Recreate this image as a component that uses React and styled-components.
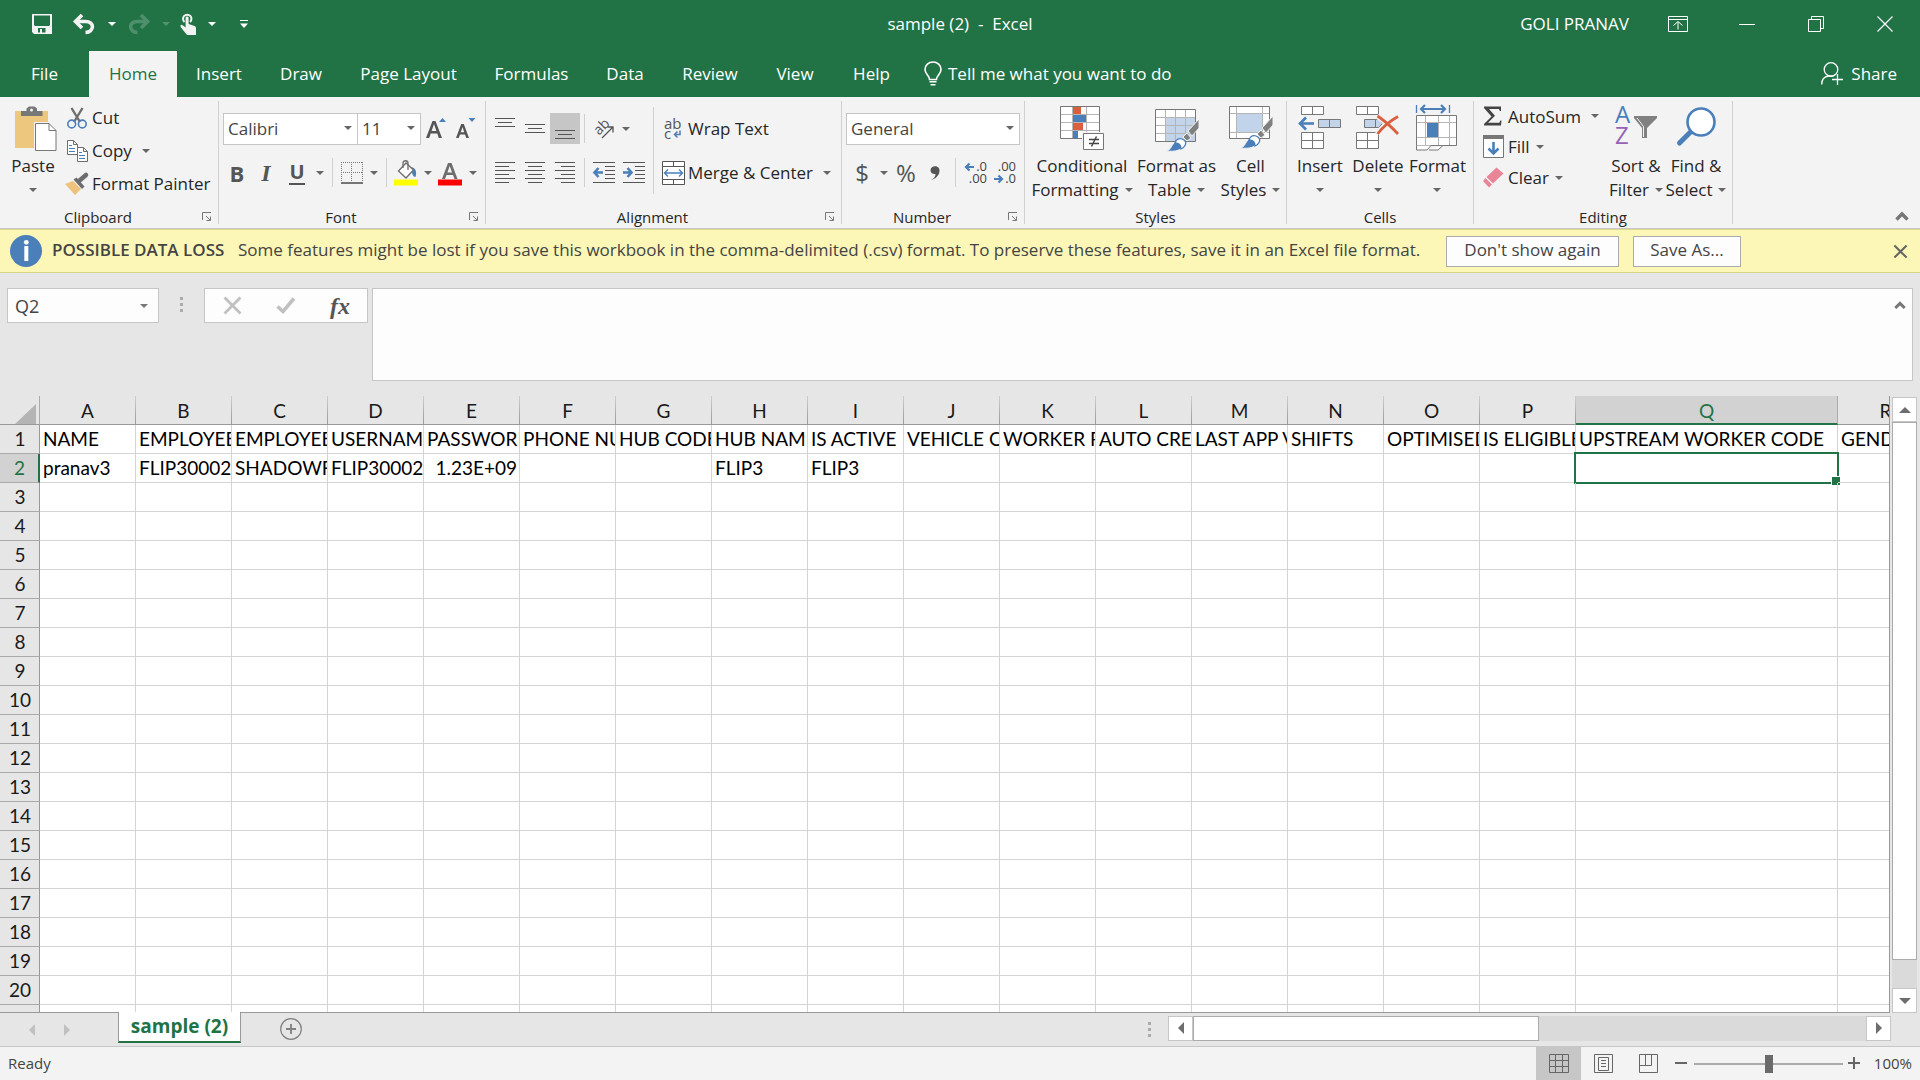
import React from 'react';
import styled, { createGlobalStyle } from 'styled-components';

const GlobalStyle = createGlobalStyle`
    * {
        box-sizing: border-box;
    }

    body {
        margin: 0;
        overflow: hidden;
        background: #e6e6e6;
        color: #262626;
        font-family: 'Open Sans', 'Noto Sans', sans-serif;
        font-size: 17px;
    }

    button, input, select, textarea {
        margin: 0;
        padding: 0;
        border: none;
        border-radius: 0;
        background: none;
        color: inherit;
        font: inherit;
        outline: none;
    }

    svg {
        display: block;
        flex-shrink: 0;
        overflow: visible;
    }
`

const Window = styled.div`
    display: flex;
    flex-direction: column;
    height: 100vh;
`

/* ---------- title bar and tabs ---------- */

const TitleBar = styled.header`
    display: grid;
    grid-template-columns: 1fr auto 1fr;
    align-items: center;
    height: 51px;
    padding-bottom: 4px;
    background: #217346;
    color: #ffffff;

    h1 {
        margin: 0;
        font-size: 17px;
        font-weight: 400;
        white-space: pre;
    }
`

const QuickAccess = styled.div`
    display: flex;
    align-items: center;
    padding-left: 24px;
`

const Tool = styled.button`
    display: flex;
    align-items: center;
    justify-content: center;
    flex-shrink: 0;
    width: ${(p) => p.$w || 30}px;
    height: 31px;
    color: ${(p) => p.$color || '#5a5a5a'};
    background: ${(p) => (p.$active ? '#c6c6c6' : 'none')};
    opacity: ${(p) => (p.$dim ? 0.22 : 1)};
`

const WindowControls = styled.div`
    display: flex;
    align-items: center;
    justify-content: flex-end;
    padding-right: 1px;

    span {
        margin-right: 14px;
    }
`

const TabBar = styled.nav`
    display: flex;
    align-items: stretch;
    height: 46px;
    padding-right: 23px;
    background: #217346;
    color: #ffffff;
`

const Tab = styled.button`
    width: ${(p) => p.$w}px;
    padding-bottom: 2px;
    white-space: nowrap;
    color: ${(p) => (p.$active ? '#217346' : '#ffffff')};
    background: ${(p) => (p.$active ? '#f3f3f3' : 'none')};
`

const TellMe = styled.button`
    display: flex;
    align-items: center;
    gap: 6px;
    margin-left: 14px;
    padding-bottom: 2px;
    white-space: nowrap;
`

const Share = styled(TellMe)`
    gap: 8px;
    margin-left: auto;
`

/* ---------- ribbon ---------- */

const Ribbon = styled.section`
    display: flex;
    height: 132px;
    padding: 4px 0;
    background: #f3f3f3;
    border-bottom: 1px solid #c6c6c6;
`

const GroupBox = styled.div`
    display: flex;
    flex-direction: column;
    flex-shrink: 0;
    width: ${(p) => p.$w}px;
    border-right: 1px solid #d0d0d0;
`

const GroupBody = styled.div`
    display: flex;
    height: 105px;
    padding-left: ${(p) => p.$pad}px;
`

const GroupLabel = styled.div`
    display: flex;
    align-items: center;
    height: 18px;
    padding-top: 3px;
    font-size: 15px;
    line-height: 18px;
    text-align: center;

    span {
        flex: 1;
    }

    button {
        display: flex;
        justify-content: center;
        width: 22px;
    }
`

const Rows = styled.div`
    display: flex;
    flex-direction: column;
    gap: 13px;
    padding-top: 12px;
`

const Row = styled.div`
    display: flex;
    align-items: center;
    height: 31px;
`

const Divider = styled.span`
    display: flex;
    flex-shrink: 0;
    justify-content: center;
    width: ${(p) => p.$w || 10}px;

    &::before {
        content: '';
        width: 1px;
        height: 29px;
        background: #d0d0d0;
    }
`

const TallDivider = styled.span`
    width: 1px;
    height: 87px;
    margin: 6px 4px 0 4px;
    background: #d0d0d0;
`

const SmallButton = styled.button`
    display: flex;
    align-items: center;
    height: ${(p) => p.$h}px;
    white-space: nowrap;
`

const IconSlot = styled.span`
    display: flex;
    justify-content: center;
    flex-shrink: 0;
    width: 30px;
`

const CaretSlot = styled.span`
    margin-left: ${(p) => p.$gap}px;
`

const Column = styled.div`
    display: flex;
    flex-direction: column;
    width: ${(p) => p.$w}px;
`

const BigButton = styled.button`
    display: grid;
    grid-template-rows: 53px 24px 24px;
    align-content: start;
    justify-content: center;
    justify-items: center;
    width: ${(p) => p.$w}px;
    flex-shrink: 0;
    line-height: 24px;
    white-space: nowrap;

    > svg {
        margin-top: 5px;
    }

    span {
        display: flex;
        align-items: center;
        gap: 6px;
    }
`

const Combo = styled.span`
    display: grid;
    align-items: center;
    width: ${(p) => p.$w}px;
    height: 32px;
    margin-right: ${(p) => (p.$joined ? '-1px' : '0')};
    background: #ffffff;
    border: 1px solid #c6c6c6;

    select {
        grid-area: 1 / 1;
        width: 100%;
        height: 30px;
        padding-left: 4px;
        appearance: none;
        color: #444444;
    }

    svg {
        grid-area: 1 / 1;
        justify-self: end;
        margin: 0 5px 2px 0;
        pointer-events: none;
    }
`

const Glyph = styled.span`
    font-family: ${(p) => (p.$serif ? "'Liberation Serif', serif" : "'Open Sans', sans-serif")};
    font-size: ${(p) => p.$size || 22}px;
    font-weight: ${(p) => (p.$bold ? 700 : 400)};
    font-style: ${(p) => (p.$italic ? 'italic' : 'normal')};
    line-height: 24px;
    color: ${(p) => p.$color || '#555555'};
`

const Underlined = styled(Glyph)`
    height: 24px;
    line-height: 22px;
    border-bottom: 2px solid #555555;
`

const Collapse = styled.button`
    align-self: flex-end;
    margin: 0 11px 3px auto;
`

/* ---------- message bar ---------- */

const MessageBar = styled.section`
    display: flex;
    align-items: center;
    flex-shrink: 0;
    height: 44px;
    padding: 0 13px 0 10px;
    background: #fcf7b6;
    border-top: 1px solid #dedb8e;
    border-bottom: 1px solid #d6d38a;
    color: #444444;
    line-height: 24px;
    white-space: nowrap;

    strong {
        width: 176px;
        margin: 0 10px;
        padding-bottom: 2px;
        font-weight: 600;
    }
`

const MessageButton = styled.button`
    width: ${(p) => p.$w}px;
    height: 31px;
    margin-right: 14px;
    padding-bottom: 2px;
    background: #fdfdfd;
    border: 1px solid #ababab;
`

const MessageText = styled.span`
    flex: 0 0 1208px;
    padding-bottom: 2px;
`

/* ---------- formula bar ---------- */

const FormulaBar = styled.section`
    display: flex;
    align-items: flex-start;
    flex-shrink: 0;
    height: 123px;
    padding: 15px 7px 15px 7px;
`

const NameBox = styled.div`
    display: flex;
    align-items: center;
    width: 152px;
    height: 35px;
    padding-right: 10px;
    background: #fdfdfd;
    border: 1px solid #c6c6c6;

    input {
        flex: 1;
        min-width: 0;
        padding-left: 7px;
        color: #444444;
        font-size: 18px;
    }
`

const Grip = styled.span`
    display: flex;
    justify-content: center;
    width: ${(p) => p.$w}px;
    padding-top: ${(p) => p.$top || 0}px;
`

const FormulaTools = styled.div`
    display: flex;
    align-items: center;
    justify-content: space-around;
    width: 164px;
    height: 35px;
    margin-right: 4px;
    background: #fdfdfd;
    border: 1px solid #c6c6c6;
`

const FormulaField = styled.div`
    display: flex;
    align-items: flex-start;
    flex: 1;
    height: 93px;
    background: #fdfdfd;
    border: 1px solid #c6c6c6;

    textarea {
        flex: 1;
        height: 91px;
        resize: none;
    }

    button {
        margin: 12px 6px 0 0;
    }
`

/* ---------- sheet ---------- */

const SheetArea = styled.main`
    display: flex;
    flex: 1;
    min-height: 0;
`

const GridPane = styled.div`
    flex: 1;
    min-width: 0;
    overflow: hidden;
    background: #ffffff;
    border-right: 1px solid #999999;
    border-bottom: 1px solid #999999;
`

const Grid = styled.table`
    table-layout: fixed;
    width: 1934px;
    border-collapse: separate;
    border-spacing: 0;
    color: #000000;
    font-family: Lato, Carlito, sans-serif;
    font-size: 19px;
    line-height: 28px;

    tr {
        height: 29px;
    }
`

const ColHead = styled.th`
    height: 29px;
    padding: 2px 0 0;
    font-weight: 400;
    color: ${(p) => (p.$active ? '#217346' : '#1a1a1a')};
    background: ${(p) => (p.$active ? '#d2d2d2' : '#e6e6e6')};
    border-right: 1px solid;
    border-bottom: ${(p) => (p.$active ? '2px solid #217346' : '1px solid #999999')};
    border-image: ${(p) => (p.$active ? 'none' : 'linear-gradient(#d0d0d0, #999999) 1')};
    border-right-color: #ababab;
    line-height: 24px;
`

const Corner = styled.th`
    padding: 8px 3px 0 0;
    background: #e6e6e6;
    border-right: 1px solid #ababab;
    border-bottom: 1px solid #999999;

    svg {
        margin-left: auto;
    }
`

const RowHead = styled.th`
    padding: 0 0 0 1px;
    font-weight: 400;
    color: ${(p) => (p.$active ? '#217346' : '#1a1a1a')};
    background: ${(p) => (p.$active ? '#d2d2d2' : '#e6e6e6')};
    border-right: ${(p) => (p.$active ? '2px solid #217346' : '1px solid #999999')};
    border-bottom: 1px solid #ababab;
`

const Cell = styled.td`
    position: relative;
    height: 29px;
    padding: 0 3px;
    border-right: 1px solid #d4d4d4;
    border-bottom: 1px solid #d4d4d4;
    text-align: ${(p) => (p.$right ? 'right' : 'left')};

    div {
        height: 28px;
        margin-right: -3px;
        padding-right: ${(p) => (p.$right ? 2 : 0)}px;
        overflow: hidden;
        white-space: nowrap;
    }
`

const Selection = styled.span`
    position: absolute;
    top: -2px;
    right: -2px;
    bottom: -2px;
    left: -2px;
    border: 2px solid #217346;

    &::after {
        content: '';
        position: absolute;
        right: -4px;
        bottom: -4px;
        width: 8px;
        height: 8px;
        background: #217346;
        border: 1px solid #ffffff;
    }
`

const VerticalScroll = styled.div`
    display: flex;
    flex-direction: column;
    width: 30px;
    padding: 1px 3px 0 2px;
`

const ScrollButton = styled.button`
    display: flex;
    align-items: center;
    justify-content: center;
    flex-shrink: 0;
    width: 25px;
    height: 25px;
    background: #ffffff;
    border: 1px solid #c6c6c6;
`

const Track = styled.div`
    display: flex;
    flex: 1;
    flex-direction: ${(p) => (p.$vertical ? 'column' : 'row')};
    background: #dadada;
`

const Thumb = styled.div`
    flex: 0 0 ${(p) => p.$size};
    background: #ffffff;
    border: 1px solid #ababab;
`

/* ---------- bottom bars ---------- */

const SheetTabs = styled.nav`
    display: flex;
    align-items: center;
    flex-shrink: 0;
    height: 34px;
    padding-left: 14px;
    border-bottom: 1px solid #c6c6c6;
`

const SheetTab = styled.button`
    align-self: flex-start;
    width: 123px;
    height: 31px;
    margin: -1px 39px 0 34px;
    padding-bottom: 2px;
    background: #ffffff;
    border: 1px solid #999999;
    border-top: none;
    border-bottom: 2px solid #217346;
    color: #217346;
    font-size: 19px;
    font-weight: 700;
    line-height: 26px;
`

const NewSheet = styled.button`
    padding-bottom: 2px;
`

const HorizontalScroll = styled.div`
    display: flex;
    width: 723px;
    height: 25px;
    margin: 0 29px 3px 0;
`

const StatusBar = styled.footer`
    display: flex;
    align-items: center;
    flex-shrink: 0;
    height: 33px;
    padding: 0 8px;
    background: #f3f3f3;
    color: #444444;
    font-size: 15px;
`

const ViewButton = styled(Tool)`
    height: 33px;
`

const ZoomSlider = styled.input`
    width: 149px;
    height: 18px;
    margin: 0 5px 0 3px;
    appearance: none;

    &::-webkit-slider-runnable-track {
        height: 2px;
        background: #ababab;
    }

    &::-webkit-slider-thumb {
        appearance: none;
        width: 8px;
        height: 18px;
        margin-top: -8px;
        background: #6a6a6a;
    }
`

const StatusText = styled.span`
    width: ${(p) => p.$w}px;
    padding-bottom: 2px;
    text-align: right;
`

const Spacer = styled.span`
    flex: 1;
`

/* ---------- icons ---------- */

const BLUE = '#4a7fb9';
const GREY = '#6d6d6d';

const Caret = ({ color = '#666666' }) => (
    <svg width="8" height="4" viewBox="0 0 8 4"><path d="M0 0h8L4 4z" fill={color} /></svg>
)

const Arrow = ({ turn = 0, w = 12, color = '#6d6d6d' }) => (
    <svg width={w} height={w} viewBox="0 0 12 12"><path d="M0 9h12L6 3z" fill={color} transform={`rotate(${turn} 6 6)`} /></svg>
)

const Chevron = ({ w = 14 }) => (
    <svg width={w} height="9" viewBox="0 0 14 9"><path d="M1.5 7.5L7 2l5.500 5.500" fill="none" stroke="#777" strokeWidth="3.400" /></svg>
)

const Dots = () => (
    <svg width="3" height="16" viewBox="0 0 3 16" fill="#ababab"><path d="M0 0h3v3H0zM0 6h3v3H0zM0 12h3v3H0z" /></svg>
)

const SaveIcon = () => (
    <svg width="20" height="20" viewBox="0 0 20 20" fill="#f3f3f3">
        <path fillRule="evenodd" d="M0 0h20v20H2l-2-2zM2 1.500v9.500l1 1h14l1-1V1.500zM6 14v4.500h2V15h2v3.500h3.500V14z" />
    </svg>
)

const UndoIcon = ({ flip }) => (
    <svg width="22" height="20" viewBox="0 0 22 20">
        <g transform={flip ? 'translate(22 0) scale(-1 1)' : undefined} fill="none" stroke="#f3f3f3" strokeWidth="3.600">
            <path d="M3 7.500h9.500c9.500 0 9 10.500 0 11" />
            <path d="M9 1L2.500 7.500 9 14" />
        </g>
    </svg>
)

const TouchIcon = () => (
    <svg width="16" height="22" viewBox="0 0 16 22">
        <path d="M4.500 9A4.200 4.200 0 1 1 10 9" fill="none" stroke="#f3f3f3" strokeWidth="2" />
        <path d="M5.600 5c0-2 3-2 3 0v6l6 2c1.300.5 1.400 1.500 1.400 2.500V22H7L1 14.500c-1.600-2.500.4-3.500 2-2l2.600 2z" fill="#f3f3f3" />
    </svg>
)

const CustomizeIcon = () => (
    <svg width="8" height="8" viewBox="0 0 8 8" fill="#fff"><path d="M0 0h8v1H0zM0 3.500h8L4 8z" /></svg>
)

const DisplayIcon = () => (
    <svg width="20" height="16" viewBox="0 0 20 16" fill="none" stroke="#fff">
        <path d="M.5.5h19v15H.5zM.5 3.500h19M10 13.500V6M5.500 9.500L10 5.500l4.500 4" />
    </svg>
)

const MinimizeIcon = () => (
    <svg width="16" height="16" viewBox="0 0 16 16"><path d="M0 8.500h16" stroke="#fff" /></svg>
)

const RestoreIcon = () => (
    <svg width="16" height="16" viewBox="0 0 16 16" fill="none" stroke="#fff"><path d="M.5 3.500h12v12H.5zM3.500 3.500v-3h12v12h-3" /></svg>
)

const CloseIcon = ({ size = 16, color = '#fff', width = 1.2 }) => (
    <svg width={size} height={size} viewBox="0 0 16 16"><path d="M.5.5l15 15M15.500.5l-15 15" stroke={color} strokeWidth={width} /></svg>
)

const BulbIcon = () => (
    <svg width="18" height="25" viewBox="0 0 18 25" fill="none" stroke="#fff" strokeWidth="1.600">
        <path d="M5.500 18.500c0-4-4.500-5-4.500-10a8 7.500 0 0 1 16 0c0 5-4.500 6-4.500 10zM5.500 20.800h7M6.500 23.800h5" />
    </svg>
)

const PersonIcon = () => (
    <svg width="22" height="23" viewBox="0 0 22 23" fill="none" stroke="#fff" strokeWidth="1.300">
        <circle cx="10" cy="7.500" r="6.800" />
        <path d="M.7 22.500c0-5 3-8 7-8.500h4M16.500 12v11M11 17.500h11" />
    </svg>
)

const PasteIcon = () => (
    <svg width="48" height="46" viewBox="-6 0 48 46">
        <path d="M0 5h33v37H0z" fill="#eec77f" />
        <path d="M6 10V5h5.500V2.500L14 .5h5.500L22 2.500V5h5.500v5z" fill="#777" />
        <circle cx="16.500" cy="4" r="1.500" fill="#f3f3f3" />
        <path d="M19 16h15l7.500 8v21.500H19z" fill="#f3f3f3" />
        <path d="M20.500 17.500H34l7 7V44.500H20.500z" fill="#fff" stroke="#777" />
        <path d="M34 17.500v7h7" fill="none" stroke="#777" />
    </svg>
)

const CutIcon = () => (
    <svg width="20" height="22" viewBox="0 0 20 22" fill="none">
        <path d="M4.500 1l8.500 14M15.500 1L7 15" stroke="#6d6d6d" strokeWidth="2.400" />
        <g stroke={BLUE} strokeWidth="1.600"><circle cx="4.700" cy="17" r="3.900" /><circle cx="15.300" cy="17" r="3.900" /></g>
    </svg>
)

const CopyIcon = () => (
    <svg width="21" height="22" viewBox="0 0 21 22" fill="#fff" stroke={GREY}>
        <path d="M.5.5h6l4 4v10h-10zM6.500.5v4h4" />
        <path d="M10.500 7.500h6l4 4v10h-10zM16.500 7.500v4h4" />
        <path d="M2 5.500h3M2 8.500h6M2 11.500h6M12 12.500h3M12 15.500h6M12 18.500h6" stroke={BLUE} />
    </svg>
)

const PainterIcon = () => (
    <svg width="24" height="22" viewBox="0 0 24 22">
        <path d="M0 11l8-3 8 8-6 6z" fill="#eec27c" />
        <path d="M8.500 6.500l3-2 8 9-2.500 2.500z" fill="#6d6d6d" />
        <path d="M14 8l7-6" stroke="#6d6d6d" strokeWidth="4.500" strokeLinecap="round" />
    </svg>
)

const LauncherIcon = () => (
    <svg width="10" height="10" viewBox="0 0 10 10" fill="none" stroke="#777">
        <path d="M.5 8V.5H9M4 4l4 4M8.500 4.500v4h-4" />
    </svg>
)

const FontSizeIcon = ({ grow }) => (
    <svg width="20" height="24" viewBox="0 0 20 24">
        <path d={grow ? 'M0 21L6.500 4h3L16 21h-3.200l-1.500-4.500H4.700L3.200 21zM5.600 14h4.800L8 7z' : 'M0 21L5.200 7h2.600L13 21h-2.700L9 17.500H4L2.700 21zM4.800 15.300h3.400L6.500 10z'} fill="#555" fillRule="evenodd" />
        <path d={grow ? 'M13 5l3.500-4L20 5z' : 'M12.500 1h7L16 5z'} fill={BLUE} />
    </svg>
)

const BordersIcon = () => (
    <svg width="22" height="22" viewBox="0 0 22 22" fill="none" stroke="#777">
        <path d="M0 .5h22M.5 0v20M21.500 0v20M10.500 0v20M0 10.500h22" strokeDasharray="1 1" />
        <path d="M0 21h22" strokeWidth="1.600" stroke="#555" />
    </svg>
)

const FillColorIcon = () => (
    <svg width="24" height="26" viewBox="0 0 24 26">
        <path d="M17 7c5 1 6 5 4.500 10-3 0-3-4-4.500-7z" fill={BLUE} />
        <path d="M12 3L4.500 11l7.500 7 7.500-8z" fill="#fff" stroke="#6d6d6d" strokeWidth="1.300" />
        <path d="M9 8V3c0-3 5-3 5 0v7" fill="none" stroke="#6d6d6d" strokeWidth="1.300" />
        <path d="M0 19.500h24v6H0z" fill="#ffff00" />
    </svg>
)

const FontColorIcon = () => (
    <svg width="24" height="26" viewBox="0 0 24 26">
        <path d="M4 19L10 3h3.500l6 16h-3l-1.500-4H8.500L7 19zM9.400 12.500h4.700L11.700 6z" fill="#6d6d6d" fillRule="evenodd" />
        <path d="M0 19.500h24v6H0z" fill="#ff0000" />
    </svg>
)

const LinesIcon = ({ lines, h = 22 }) => (
    <svg width="20" height={h} viewBox={`0 0 20 ${h}`}>
        <path d={lines.map(([x, y, w]) => `M${x} ${y}.5h${w}`).join('')} stroke="#555" strokeWidth="1" />
    </svg>
)

const AngleIcon = () => (
    <svg width="22" height="22" viewBox="0 0 22 22">
        <text x="1" y="14" transform="rotate(-45 8 10)" fontFamily="Open Sans" fontSize="14" fill="#555">ab</text>
        <path d="M9 20L19.500 9.500M14.500 9h5.500v5.500" fill="none" stroke="#555" strokeWidth="1.300" />
    </svg>
)

const IndentIcon = ({ out }) => (
    <svg width="22" height="22" viewBox="0 0 22 22" fill="none">
        <path d="M0 .5h22M12 4.500h10M12 8.500h10M12 12.500h10M12 16.500h10M0 20.500h22" stroke="#555" />
        <path d={out ? 'M1 10.500h9M5.500 6L1.500 10.500l4 4.500' : 'M0 10.500h8M4.500 6l4 4.500-4 4.500'} stroke={BLUE} strokeWidth="2.600" />
    </svg>
)

const WrapIcon = () => (
    <svg width="18" height="22" viewBox="0 0 18 22">
        <g fontFamily="Open Sans" fontSize="15" fill="#555"><text x="0" y="11">ab</text><text x="0" y="21">c</text></g>
        <path d="M16 12.500v4h-5M13.500 13.500l-3 3 3 3" fill="none" stroke={BLUE} strokeWidth="1.500" />
    </svg>
)

const MergeIcon = () => (
    <svg width="23" height="24" viewBox="0 0 23 24" fill="#fff" stroke="#555">
        <path d="M.5.5h22v23H.5zM.5 5.500h22M.5 18.500h22M11.500.5v5M11.500 18.500v5" />
        <path d="M3 12h17M6 8.500L2.500 12 6 15.500M17 8.500l3.500 3.500-3.500 3.500" fill="none" stroke={BLUE} strokeWidth="1.400" />
    </svg>
)

const DecimalIcon = ({ more }) => (
    <svg width="24" height="24" viewBox="0 0 24 24">
        <g fontFamily="Open Sans" fontSize="13" fill="#444" textAnchor="end">
            <text x="23" y="10">{more ? '.0' : '.00'}</text>
            <text x="23" y="22">{more ? '.00' : '.0'}</text>
        </g>
        <path d={more ? 'M2 6h8M5.500 2.500L2 6l3.500 3.500' : 'M1 18h8M5.500 14.500L9 18l-3.500 3.500'} fill="none" stroke={BLUE} strokeWidth="2.200" />
    </svg>
)

const ConditionalIcon = () => (
    <svg width="44" height="45" viewBox="0 0 44 45">
        <path d="M.5.5h39v32H.5z" fill="#fff" />
        <path d="M1 8.500h39M1 16.500h39M1 24.500h39M12.500 1v32M26.500 1v32" stroke="#b5b5b5" fill="none" />
        <path d="M.5.5h39v32H.5z" fill="none" stroke="#777" />
        <path d="M13 1h8v7h-8zM13 17h10v7H13z" fill="#d9603f" />
        <path d="M13 9h13v7H13zM13 25h5v7h-5z" fill={BLUE} />
        <path d="M22 26h22v19H22z" fill="#f3f3f3" />
        <path d="M23.500 27.500h20v16h-20z" fill="#fff" stroke="#777" />
        <path d="M29 33.500h10M29 37.500h10M36.500 30.500l-5 10" stroke="#444" strokeWidth="1.400" />
    </svg>
)

const Brush = () => (
    <g>
        <path d="M11 45c5-1 5-5 8-8 3-3 8-1 8 3s-6 6-16 5z" fill={BLUE} stroke="#f3f3f3" strokeWidth="1" />
        <path d="M20 37c1-4 5-6 9-3s0 8-3 9c0-4-2-6-6-6z" fill="#fff" stroke={BLUE} strokeWidth="1.300" />
        <path d="M28 31l4-4 4 5-4 3z" fill="#808080" stroke="#f3f3f3" strokeWidth="1" />
        <path d="M33 25l11-12v9l-7 8z" fill="#808080" stroke="#f3f3f3" strokeWidth="1" />
    </g>
)

const FormatTableIcon = () => (
    <svg width="44" height="45" viewBox="0 0 44 45">
        <path d="M.5 3.500h40v32H.5z" fill="#fff" />
        <path d="M11 12h29v23H11z" fill="#c1d4e9" />
        <path d="M1 11.500h39M1 19.500h39M1 27.500h39M10.500 4v31M20.500 4v31M30.500 4v31" stroke="#b5b5b5" />
        <path d="M.5 3.500h40v32H.5z" fill="none" stroke="#777" />
        <Brush />
    </svg>
)

const CellStylesIcon = () => (
    <svg width="44" height="45" viewBox="0 0 44 45">
        <path d="M.5.5h40v32H.5z" fill="#fff" />
        <path d="M8 8h25v18H8z" fill="#c1d4e9" />
        <path d="M1 7.500h39M1 26.500h39M7.500 1v31M33.500 1v31" stroke="#b5b5b5" />
        <path d="M.5.5h40v32H.5z" fill="none" stroke="#777" />
        <g transform="translate(0 -3)"><Brush /></g>
    </svg>
)

const InsertCellsIcon = () => (
    <svg width="44" height="45" viewBox="0 0 44 45" fill="#fff" stroke="#777">
        <path d="M3.500.5h22v8h-22zM14.500.5v8M3.500 26.500h22v16h-22zM3.500 34.500h22M14.500 26.500v16" />
        <path d="M20.500 13.500h22v8h-22zM31.500 13.500v8" fill="#c1d4e9" />
        <path d="M1 17.500h15M8 11.500l-6 6 6 6" fill="none" stroke={BLUE} strokeWidth="2.600" />
    </svg>
)

const DeleteCellsIcon = () => (
    <svg width="44" height="45" viewBox="0 0 44 45" fill="#fff" stroke="#777">
        <path d="M.5.5h22v8H.5zM11.500.5v8M.5 26.500h22v16H.5zM.5 34.500h22M11.500 26.500v16" />
        <path d="M8.500 13.500h14l4 4-4 4h-14zM19.500 13.500v8" fill="#c1d4e9" />
        <path d="M21.500 10c6 4 15 12 20.500 18M42 10.500C34 15 26 22 21.500 28" fill="none" stroke="#f3f3f3" strokeWidth="6" />
        <path d="M21.500 10c6 4 15 12 20.500 18M42 10.500C34 15 26 22 21.500 28" fill="none" stroke="#d9603f" strokeWidth="2.800" />
    </svg>
)

const FormatCellsIcon = () => (
    <svg width="42" height="46" viewBox="0 1 42 46" fill="none">
        <path d="M.5 0v8M33.500 0v8" stroke={BLUE} strokeWidth="1.300" />
        <path d="M5 4h24M9 0L5 4l4 4M25 0l4 4-4 4" stroke={BLUE} strokeWidth="2.200" />
        <path d="M.5 10.500h40v30H.5z" fill="#fff" />
        <path d="M1 17.500h39M1 32.500h39M9.500 11v29M22.500 11v29M33.500 11v29" stroke="#b5b5b5" />
        <path d="M11 18h11v14H11z" fill={BLUE} />
        <path d="M.5 10.500h40v30H.5z" stroke="#777" />
        <path d="M.5 40.500v4.500H11l4-4.500M13 45h9l5-4.500" fill="#fff" stroke="#777" />
    </svg>
)

const SigmaIcon = () => (
    <svg width="18" height="20" viewBox="0 0 18 20"><path d="M0 .5h17V5h-1.200l-.8-2H5l6 6.800-7 7h11.300l1-2.300h1.200l-.5 5H0v-1.500L7.500 10.500 0 2z" fill="#444" /></svg>
)

const FillIcon = () => (
    <svg width="21" height="23" viewBox="0 0 21 23" fill="#fff">
        <path d="M.5.5h20v22H.5z" stroke="#777" /><path d="M0 0h21v4H0z" fill="#777" />
        <path d="M10.500 7v12M5.500 13.500l5 5 5-5" fill="none" stroke={BLUE} strokeWidth="2.600" />
    </svg>
)

const EraserIcon = () => (
    <svg width="21" height="21" viewBox="0 0 21 21" fill="#e88597"><path d="M13.500.5l7 6L10 16.500l-6.500-6.500zM2.500 11L9 17.500 6 20.500 0 14z" /></svg>
)

const SortIcon = () => (
    <svg width="42" height="45" viewBox="0 0 42 45">
        <g fontFamily="Open Sans" fontSize="24"><text x="0" y="17" fill={BLUE}>A</text><text x="0" y="38" fill="#9463b8">Z</text></g>
        <path d="M19 10h23v2L32 22v10h-5V22l-8-10z" fill="#808080" />
        <path d="M22 12l6.500 8.500V31" stroke="#f3f3f3" fill="none" />
    </svg>
)

const FindIcon = () => (
    <svg width="42" height="45" viewBox="0 0 42 45">
        <path d="M4.500 37L17 24.500" stroke={BLUE} strokeWidth="5" strokeLinecap="round" />
        <circle cx="26" cy="16" r="13.500" fill="#fff" stroke={BLUE} strokeWidth="2.600" />
    </svg>
)

const InfoIcon = () => (
    <svg width="32" height="32" viewBox="0 0 32 32">
        <circle cx="16" cy="16" r="16" fill={BLUE} />
        <path d="M14.300 11h4v15h-4z" fill="#fff" /><circle cx="16.300" cy="7.300" r="2.400" fill="#fff" />
    </svg>
)

const CheckIcon = () => (
    <svg width="20" height="17" viewBox="0 0 20 17"><path d="M1.500 9.500l5.500 5L18 1.500" fill="none" stroke="#c0c0c0" strokeWidth="3.600" /></svg>
)

const AddIcon = () => (
    <svg width="22" height="22" viewBox="0 0 22 22" fill="none" stroke="#808080">
        <circle cx="11" cy="11" r="10.300" strokeWidth="1.200" /><path d="M11 6v10M6 11h10" strokeWidth="1.800" />
    </svg>
)

const NormalViewIcon = () => (
    <svg width="20" height="20" viewBox="0 0 20 20" fill="none" stroke="#666"><path d="M.5.5h19v18H.5zM.5 6.500h19M.5 12.500h19M6.500.5v18M13.500.5v18" /></svg>
)

const PageViewIcon = () => (
    <svg width="20" height="20" viewBox="0 0 20 20" fill="none" stroke="#666"><path d="M.5.5h18v18H.5zM4.500 3.500h10v13h-10zM7 6.500h5M7 9.500h5M7 12.500h5" /></svg>
)

const BreakViewIcon = () => (
    <svg width="20" height="20" viewBox="0 0 20 20" fill="none" stroke="#666"><path d="M.5.5h18v18H.5zM.5 11.500h12v-11M6.500.5v11" /></svg>
)

const ZoomSign = ({ plus }) => (
    <svg width="12" height="14" viewBox="0 0 12 14"><path d={plus ? 'M0 6h12M6 0v12' : 'M0 6h12'} stroke="#666" strokeWidth="2" /></svg>
)

/* ---------- data ---------- */

const TABS = [
    ['File', 89], ['Home', 88], ['Insert', 84], ['Draw', 80], ['Page Layout', 135], ['Formulas', 111],
    ['Data', 76], ['Review', 94], ['View', 76], ['Help', 77],
];

const COLUMNS = 'ABCDEFGHIJKLMNOPQR'.split('');

const SHEET = {
    1: [
        'NAME', 'EMPLOYEE ID', 'EMPLOYEE NAME', 'USERNAME', 'PASSWORD', 'PHONE NUMBER', 'HUB CODE', 'HUB NAME', 'IS ACTIVE',
        'VEHICLE CODE', 'WORKER ROLE', 'AUTO CREATE', 'LAST APP VERSION', 'SHIFTS', 'OPTIMISED', 'IS ELIGIBLE',
        'UPSTREAM WORKER CODE', 'GENDER',
    ],
    2: ['pranav3', 'FLIP30002', 'SHADOWFAX', 'FLIP30002', '1.23E+09', '', '', 'FLIP3', 'FLIP3'],
};

const ROWS = Array.from({ length: 21 }, (_, i) => i + 1);

/* ---------- parts ---------- */

const Group = ({ label, w, pad, launcher = true, children }) => (
    <GroupBox $w={w}>
        <GroupBody $pad={pad}>{children}</GroupBody>
        <GroupLabel>
            <span>{label}</span>
            {launcher && <button aria-label={`${label} settings`}><LauncherIcon /></button>}
        </GroupLabel>
    </GroupBox>
)

const Big = ({ icon, w, top, bottom }) => (
    <BigButton $w={w}>
        {icon}
        <span>{top}</span>
        <span>{bottom}<Caret /></span>
    </BigButton>
)

const Small = ({ icon, h, gap, children }) => (
    <SmallButton $h={h}>
        <IconSlot>{icon}</IconSlot>
        {children}
        {gap && <CaretSlot $gap={gap}><Caret /></CaretSlot>}
    </SmallButton>
)

const Drop = ({ w = 14, label, color }) => (
    <Tool $w={w} aria-label={label}><Caret color={color} /></Tool>
)

const Select = ({ w, label, value, joined }) => (
    <Combo $w={w} $joined={joined}>
        <select aria-label={label} defaultValue={value}><option>{value}</option></select>
        <Caret />
    </Combo>
)

const Header = () => (
    <>
        <TitleBar>
            <QuickAccess>
                <Tool $w={36} aria-label="Save"><SaveIcon /></Tool>
                <Tool $w={48} aria-label="Undo"><UndoIcon /></Tool>
                <Drop w={8} label="Undo list" color="#fff" />
                <Tool $w={46} $dim aria-label="Redo"><UndoIcon flip /></Tool>
                <Tool $w={8} $dim aria-label="Redo list"><Caret color="#fff" /></Tool>
                <Tool $w={36} aria-label="Touch mode"><TouchIcon /></Tool>
                <Drop w={12} label="Touch mode list" color="#fff" />
                <Tool $w={52} aria-label="Customize toolbar"><CustomizeIcon /></Tool>
            </QuickAccess>
            <h1>{'sample (2)  -  Excel'}</h1>
            <WindowControls>
                <span>GOLI PRANAV</span>
                <Tool $w={69} aria-label="Ribbon display"><DisplayIcon /></Tool>
                <Tool $w={69} aria-label="Minimize"><MinimizeIcon /></Tool>
                <Tool $w={69} aria-label="Restore"><RestoreIcon /></Tool>
                <Tool $w={69} aria-label="Close"><CloseIcon /></Tool>
            </WindowControls>
        </TitleBar>
        <TabBar>
            {TABS.map(([name, w]) => <Tab key={name} $w={w} $active={name === 'Home'}>{name}</Tab>)}
            <TellMe><BulbIcon />Tell me what you want to do</TellMe>
            <Share><PersonIcon />Share</Share>
        </TabBar>
    </>
)

const left = [0, 4, 8, 12, 16, 20].map((y, i) => [0, y, i % 2 ? 14 : 20]);
const center = [0, 4, 8, 12, 16, 20].map((y, i) => (i % 2 ? [3, y, 14] : [0, y, 20]));
const right = [0, 4, 8, 12, 16, 20].map((y, i) => (i % 2 ? [6, y, 14] : [0, y, 20]));

const RibbonBar = () => (
    <Ribbon>
        <Group label="Clipboard" w={219} pad={4}>
            <Big icon={<PasteIcon />} w={58} top="Paste" />
            <Column>
                <Small icon={<CutIcon />} h={33}>Cut</Small>
                <Small icon={<CopyIcon />} h={33} gap={10}>Copy</Small>
                <Small icon={<PainterIcon />} h={33}>Format Painter</Small>
            </Column>
        </Group>
        <Group label="Font" w={267} pad={4}>
            <Rows>
                <Row>
                    <Select w={135} label="Font name" value="Calibri" joined />
                    <Select w={64} label="Font size" value="11" />
                    <Tool $w={30} aria-label="Increase font size"><FontSizeIcon grow /></Tool>
                    <Tool $w={30} aria-label="Decrease font size"><FontSizeIcon /></Tool>
                </Row>
                <Row>
                    <Tool $w={28}><Glyph $bold>B</Glyph></Tool>
                    <Tool $w={30}><Glyph $bold $serif $italic $size={24}>I</Glyph></Tool>
                    <Tool $w={32}><Underlined $bold $size={20}>U</Underlined></Tool>
                    <Drop label="Underline list" />
                    <Divider />
                    <Tool aria-label="Borders"><BordersIcon /></Tool>
                    <Drop label="Border list" />
                    <Divider />
                    <Tool aria-label="Fill color"><FillColorIcon /></Tool>
                    <Drop label="Fill colors" />
                    <Tool aria-label="Font color"><FontColorIcon /></Tool>
                    <Drop w={16} label="Font colors" />
                </Row>
            </Rows>
        </Group>
        <Group label="Alignment" w={356} pad={4}>
            <Rows>
                <Row>
                    <Tool aria-label="Top align"><LinesIcon lines={[[0, 4, 20], [3, 8, 14], [0, 12, 20]]} h={30} /></Tool>
                    <Tool aria-label="Middle align"><LinesIcon lines={[[0, 10, 20], [3, 14, 14], [0, 18, 20]]} h={30} /></Tool>
                    <Tool $active aria-label="Bottom align"><LinesIcon lines={[[0, 16, 20], [3, 20, 14], [0, 24, 20]]} h={30} /></Tool>
                    <Divider $w={9} />
                    <Tool aria-label="Orientation"><AngleIcon /></Tool>
                    <Drop label="Orientation list" />
                </Row>
                <Row>
                    <Tool aria-label="Align left"><LinesIcon lines={left} /></Tool>
                    <Tool aria-label="Center"><LinesIcon lines={center} /></Tool>
                    <Tool aria-label="Align right"><LinesIcon lines={right} /></Tool>
                    <Divider $w={9} />
                    <Tool aria-label="Decrease indent"><IndentIcon out /></Tool>
                    <Tool aria-label="Increase indent"><IndentIcon /></Tool>
                </Row>
            </Rows>
            <TallDivider />
            <Rows>
                <Small icon={<WrapIcon />} h={31}>Wrap Text</Small>
                <Small icon={<MergeIcon />} h={31} gap={10}>Merge &amp; Center</Small>
            </Rows>
        </Group>
        <Group label="Number" w={183} pad={4}>
            <Rows>
                <Row><Select w={174} label="Number format" value="General" /></Row>
                <Row>
                    <Tool $w={32}><Glyph $size={24}>$</Glyph></Tool>
                    <Drop w={12} label="Currency list" />
                    <Tool $w={32}><Glyph $size={24}>%</Glyph></Tool>
                    <Tool $w={26} aria-label="Comma style">
                        <svg width="10" height="14" viewBox="0 0 10 14"><path d="M1 14c3-1.500 4.500-3.500 4.500-6C2.500 8.500.5 6.500.5 4.300.5-1 10-1.500 9.500 5 9.200 9.500 5.500 13 1 14z" fill="#555" /></svg>
                    </Tool>
                    <Divider $w={14} />
                    <Tool $w={28} aria-label="Increase decimal"><DecimalIcon more /></Tool>
                    <Tool aria-label="Decrease decimal"><DecimalIcon /></Tool>
                </Row>
            </Rows>
        </Group>
        <Group label="Styles" w={262} pad={3} launcher={false}>
            <Big icon={<ConditionalIcon />} w={108} top="Conditional" bottom="Formatting" />
            <Big icon={<FormatTableIcon />} w={81} top="Format as" bottom="Table" />
            <Big icon={<CellStylesIcon />} w={67} top="Cell" bottom="Styles" />
        </Group>
        <Group label="Cells" w={187} pad={4} launcher={false}>
            <Big icon={<InsertCellsIcon />} w={58} top="Insert" />
            <Big icon={<DeleteCellsIcon />} w={58} top="Delete" />
            <Big icon={<FormatCellsIcon />} w={61} top="Format" />
        </Group>
        <Group label="Editing" w={259} pad={4} launcher={false}>
            <Column $w={128}>
                <Small icon={<SigmaIcon />} h={30} gap={10}>AutoSum</Small>
                <Small icon={<FillIcon />} h={31} gap={6}>Fill</Small>
                <Small icon={<EraserIcon />} h={31} gap={6}>Clear</Small>
            </Column>
            <Big icon={<SortIcon />} w={60} top="Sort &amp;" bottom="Filter" />
            <Big icon={<FindIcon />} w={60} top="Find &amp;" bottom="Select" />
        </Group>
        <Collapse aria-label="Collapse ribbon"><Chevron /></Collapse>
    </Ribbon>
)

const Sheet = () => (
    <SheetArea>
        <GridPane>
            <Grid>
                <colgroup>
                    <col width="40" />
                    {COLUMNS.map((c) => <col key={c} width={c === 'Q' ? 262 : 96} />)}
                </colgroup>
                <thead>
                    <tr>
                        <Corner><svg width="21" height="20" viewBox="0 0 21 20"><path d="M21 0v20H0z" fill="#b4b4b4" /></svg></Corner>
                        {COLUMNS.map((c) => <ColHead key={c} $active={c === 'Q'}>{c}</ColHead>)}
                    </tr>
                </thead>
                <tbody>
                    {ROWS.map((r) => (
                        <tr key={r}>
                            <RowHead $active={r === 2}>{r}</RowHead>
                            {COLUMNS.map((c, i) => {
                                const value = SHEET[r] && SHEET[r][i];
                                return (
                                    <Cell key={c} $right={value === '1.23E+09'}>
                                        {value && <div>{value}</div>}
                                        {r === 2 && c === 'Q' && <Selection />}
                                    </Cell>
                                )
                            })}
                        </tr>
                    ))}
                </tbody>
            </Grid>
        </GridPane>
        <VerticalScroll>
            <ScrollButton aria-label="Scroll up"><Arrow /></ScrollButton>
            <Track $vertical><Thumb $size="95%" /></Track>
            <ScrollButton aria-label="Scroll down"><Arrow turn={180} /></ScrollButton>
        </VerticalScroll>
    </SheetArea>
)

const App = () => {
    return (
        <Window>
            <GlobalStyle />
            <Header />
            <RibbonBar />
            <MessageBar>
                <InfoIcon />
                <strong>POSSIBLE DATA LOSS</strong>
                <MessageText>Some features might be lost if you save this workbook in the comma-delimited (.csv) format. To preserve these features, save it in an Excel file format.</MessageText>
                <MessageButton $w={173}>Don't show again</MessageButton>
                <MessageButton $w={108}>Save As...</MessageButton>
                <Spacer />
                <button aria-label="Dismiss"><CloseIcon size={13} color="#666" width={2.6} /></button>
            </MessageBar>
            <FormulaBar>
                <NameBox>
                    <input aria-label="Name box" defaultValue="Q2" />
                    <Caret color="#777" />
                </NameBox>
                <Grip $w={45} $top={9}><Dots /></Grip>
                <FormulaTools>
                    <Tool aria-label="Cancel"><CloseIcon size={17} color="#c0c0c0" width={2.6} /></Tool>
                    <Tool aria-label="Enter"><CheckIcon /></Tool>
                    <Tool><Glyph $serif $italic $bold $size={24}>fx</Glyph></Tool>
                </FormulaTools>
                <FormulaField>
                    <textarea aria-label="Formula" />
                    <button aria-label="Collapse formula bar"><Chevron w={12} /></button>
                </FormulaField>
            </FormulaBar>
            <Sheet />
            <SheetTabs>
                <Tool $w={35} aria-label="Previous sheet"><Arrow turn={-90} color="#c0c0c0" /></Tool>
                <Tool $w={35} aria-label="Next sheet"><Arrow turn={90} color="#c0c0c0" /></Tool>
                <SheetTab>sample (2)</SheetTab>
                <NewSheet aria-label="New sheet"><AddIcon /></NewSheet>
                <Spacer />
                <Grip $w={38}><Dots /></Grip>
                <HorizontalScroll>
                    <ScrollButton aria-label="Scroll left"><Arrow turn={-90} /></ScrollButton>
                    <Track><Thumb $size="346px" /></Track>
                    <ScrollButton aria-label="Scroll right"><Arrow turn={90} /></ScrollButton>
                </HorizontalScroll>
            </SheetTabs>
            <StatusBar>
                <StatusText>Ready</StatusText>
                <Spacer />
                <ViewButton $w={45} $active aria-label="Normal view"><NormalViewIcon /></ViewButton>
                <ViewButton $w={45} aria-label="Page layout view"><PageViewIcon /></ViewButton>
                <ViewButton $w={45} aria-label="Page break view"><BreakViewIcon /></ViewButton>
                <Tool $w={20} aria-label="Zoom out"><ZoomSign /></Tool>
                <ZoomSlider type="range" aria-label="Zoom" min="0" max="100" defaultValue="50" />
                <button aria-label="Zoom in"><ZoomSign plus /></button>
                <StatusText $w={52}>100%</StatusText>
            </StatusBar>
        </Window>
    )
}

export default App
